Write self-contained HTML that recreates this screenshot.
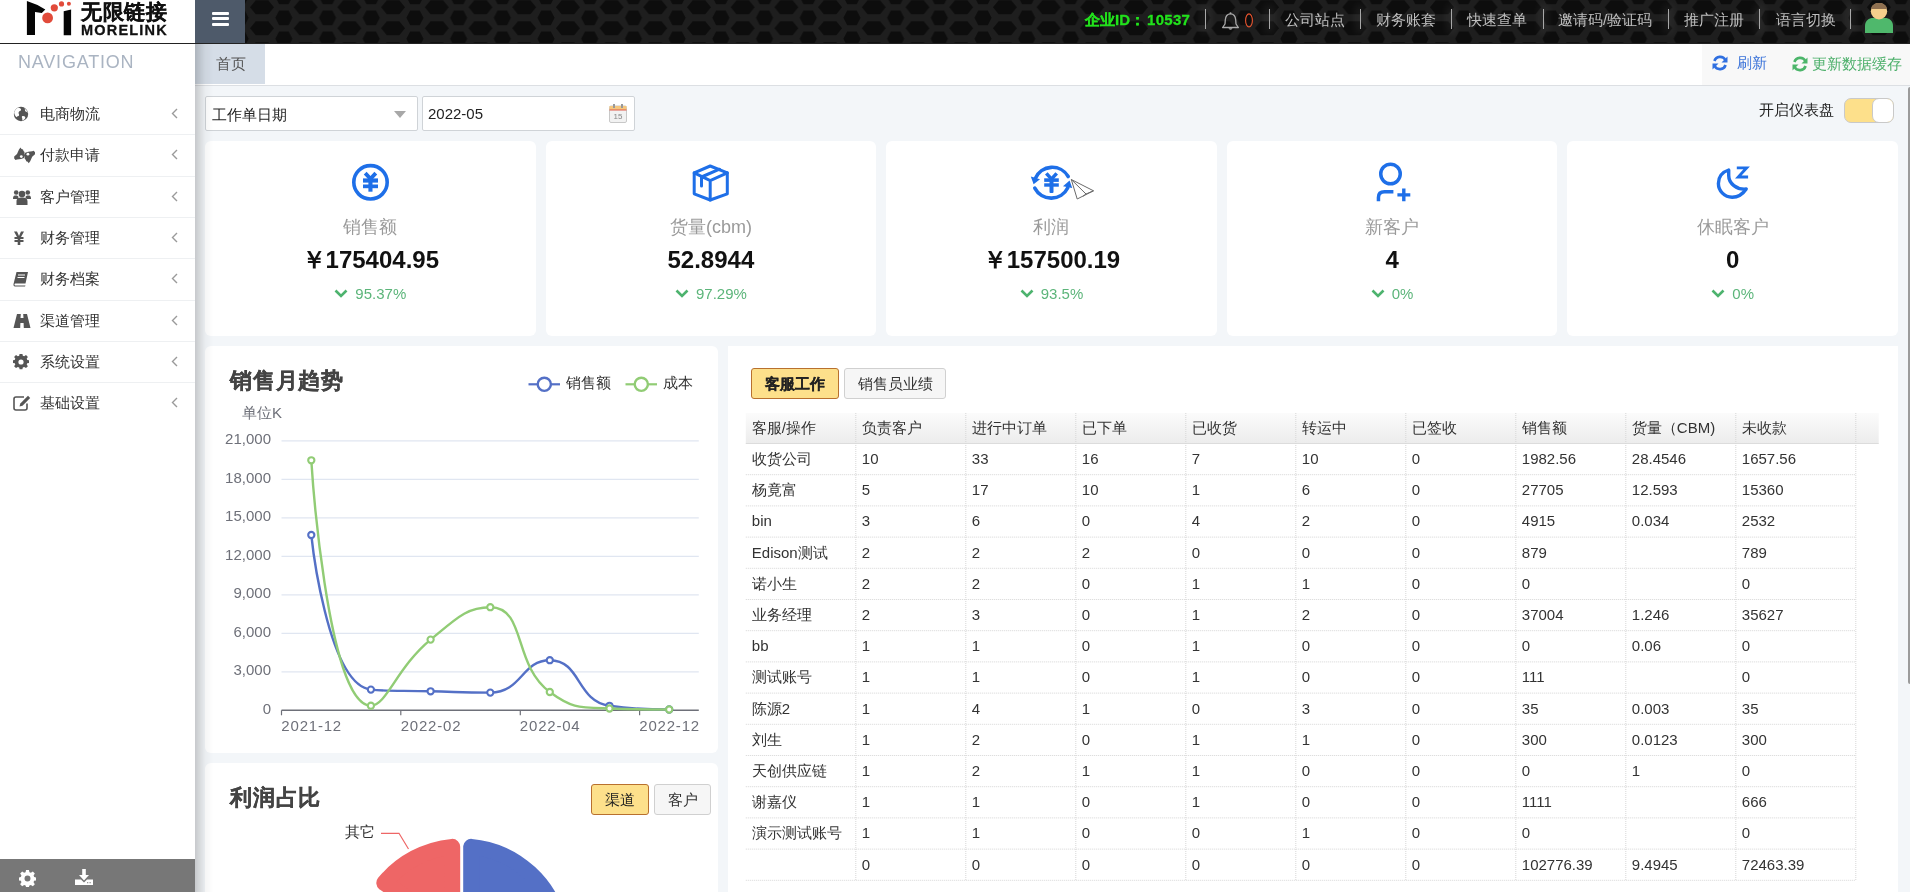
<!DOCTYPE html><html><head><meta charset="utf-8"><style>
*{box-sizing:border-box;margin:0;padding:0}
html,body{width:1910px;height:892px;overflow:hidden}
body{position:relative;background:#f3f6f9;font-family:"Liberation Sans",sans-serif;color:#333;font-size:14px}
.abs{position:absolute}
svg{display:block}
#side{left:0;top:0;width:195px;height:892px;background:#fff}
#hdr{left:195px;top:0;width:1715px;height:43px;background:#1c1c1c;overflow:hidden}
#hline{left:0;top:43px;width:1910px;height:1px;background:#222}
#ham{left:195px;top:0;width:50px;height:43px;background:#4e5a6a}
#tabbar{left:195px;top:44px;width:1715px;height:41px;background:#fff}
#tabline{left:195px;top:85px;width:1715px;height:1px;background:#dcdfe3}
#shadow{left:195px;top:44px;width:18px;height:848px;z-index:5;background:linear-gradient(to right,rgba(0,0,0,.18) 0px,rgba(0,0,0,.11) 5px,rgba(0,0,0,.05) 9px,rgba(0,0,0,.03) 11px,rgba(0,0,0,.015) 15px,rgba(0,0,0,0) 18px)}
.nav{position:absolute;left:0;width:195px;height:41px;}
.nav .t{position:absolute;left:40px;top:12px;font-size:15px;line-height:18px;color:#333;white-space:nowrap}
.nav .ic{position:absolute;left:13px;top:13px;width:22px;height:16px}
.nav .ch{position:absolute;left:171px;top:15px}
.sep{position:absolute;left:0;width:195px;height:1px;background:#eef0f2}
.hi{position:absolute;top:11px;font-size:15px;line-height:18px;color:#bfbfbf;white-space:nowrap}
.hs{position:absolute;top:9px;width:1px;height:20px;background:#a8a8a8;box-shadow:0 0 9px 4px rgba(255,255,255,.07)}
.card{position:absolute;top:141px;width:331px;height:195px;background:#fff;border-radius:6px}
.card .ico{position:absolute;left:0;top:22px;width:331px;height:40px}
.card .lb{position:absolute;left:0;width:331px;top:74.5px;text-align:center;font-size:18px;line-height:22px;color:#9a9a9a;white-space:nowrap}
.card .vl{position:absolute;left:0;width:331px;top:105px;text-align:center;font-size:24px;line-height:28px;color:#111;font-weight:bold;white-space:nowrap}
.card .pc{position:absolute;left:0;width:331px;top:143.5px;text-align:center;font-size:15px;line-height:18px;color:#5cb57a;white-space:nowrap}
.panel{position:absolute;background:#fff;border-radius:6px}
table.dt{position:absolute;border-collapse:collapse;table-layout:fixed;font-size:15px;color:#333}
.dt td,.dt th{height:31.2px;padding:0 0 0 6px;text-align:left;font-weight:normal;white-space:nowrap;overflow:hidden;border-bottom:1px dotted #c8c8c8;border-right:1px dotted #c8c8c8}
.dt th{background:linear-gradient(#fafafa,#ececec);border-bottom:1px solid #dcdcdc;height:30.7px}
#root{position:absolute;left:0;top:0;width:1910px;height:892px;will-change:transform}</style></head><body><div id="root">
<div id="side" class="abs">
<svg class="abs" style="left:0;top:0" width="80" height="43" viewBox="0 0 80 43">
<path d="M26.9,1 Q37,4 45.3,9.6 L41.8,13 L35,12 L35,35 L26.9,35 Z" fill="#050505"/>
<path d="M63.7,11.2 L71.1,9.4 L71.1,35.2 L63.7,35.2 Z" fill="#050505"/>
<circle cx="47.6" cy="17.9" r="5.4" fill="#e14b3b"/>
<circle cx="54.3" cy="7.8" r="3.6" fill="#e14b3b"/>
<circle cx="61.5" cy="3.9" r="2.6" fill="#e14b3b"/>
<circle cx="68.9" cy="3.8" r="2" fill="#e14b3b"/>
</svg>
<div class="abs" style="left:81px;top:0px;font-size:21px;line-height:24px;font-weight:bold;color:#111;white-space:nowrap;letter-spacing:0.6px;-webkit-text-stroke:0.25px #111">无限链接</div>
<div class="abs" style="left:81px;top:22px;font-size:14.5px;line-height:16px;font-weight:bold;color:#111;letter-spacing:1.2px;white-space:nowrap;-webkit-text-stroke:0.3px #111">MORELINK</div>
<div class="abs" style="left:18px;top:52px;font-size:18px;line-height:20px;color:#aab4c2;letter-spacing:0.8px">NAVIGATION</div>
<div class="nav" style="top:93.1px"><div class="ic"><svg width="16" height="16" viewBox="0 0 16 16"><circle cx="8" cy="8" r="7.2" fill="#555"/><path d="M5.5,1.6 C7,2.2 8.3,2.6 8,4 C7.7,5.2 6,5 5.6,6.4 C5.2,7.6 6.6,8.4 6,9.6 C5.5,10.6 4.2,10.2 3.6,11.2 C2.2,10 1.2,8 1.2,6.5 C2,4 3.5,2.5 5.5,1.6 Z" fill="#fff"/><path d="M9.5,10 C11,9.6 12.6,10.4 12.3,12 C12,13.3 10.5,14 9.6,14.6 C9,13.8 9.6,12.8 9,11.8 C8.7,11.2 8.8,10.3 9.5,10 Z" fill="#fff"/><path d="M11,2.2 C12,3 12.3,4 12,5 C13,5.5 14,6 14.6,7 C14.4,5 13.2,3.2 11,2.2 Z" fill="#fff"/></svg></div><div class="t">电商物流</div><svg class="ch" width="7" height="11" viewBox="0 0 7 11"><path d="M6,1 L1.5,5.5 L6,10" stroke="#9a9a9a" stroke-width="1.4" fill="none"/></svg></div>
<div class="sep" style="top:134.4px"></div>
<div class="nav" style="top:134.4px"><div class="ic"><svg width="24" height="17" viewBox="0 0 24 17"><path d="M1.2,9.5 L4.0,7.0 L6.0,2.5 L7.5,0.6 L8.5,2.0 L10.0,2.5 L10.5,4.0 L11.5,5.0 L11.5,7.0 L12.0,8.5 L11.0,11.0 L8.0,12.0 L4.0,12.5 L2.5,13.0 L1.2,11.5 Z" fill="#555"/><path d="M22.0,7.3 L19.2,9.8 L17.2,14.3 L15.7,16.2 L14.7,14.8 L13.2,14.3 L12.7,12.8 L11.7,11.8 L11.7,9.8 L11.2,8.3 L12.2,5.8 L15.2,4.8 L19.2,4.3 L20.7,3.8 L22.0,5.3 Z" fill="#555"/><circle cx="8.3" cy="9.6" r="1.4" fill="#fff"/><circle cx="14.9" cy="7.2" r="1.4" fill="#fff"/></svg></div><div class="t">付款申请</div><svg class="ch" width="7" height="11" viewBox="0 0 7 11"><path d="M6,1 L1.5,5.5 L6,10" stroke="#9a9a9a" stroke-width="1.4" fill="none"/></svg></div>
<div class="sep" style="top:175.7px"></div>
<div class="nav" style="top:175.7px"><div class="ic"><svg width="18" height="16" viewBox="0 0 18 16"><circle cx="3.2" cy="3.5" r="2.3" fill="#555"/><circle cx="14.8" cy="3.5" r="2.3" fill="#555"/><circle cx="9" cy="5" r="3.3" fill="#555"/><path d="M0,9.5 C0,7 1,6.5 3,6.5 C4.5,6.5 5,7 5.5,8 L5,10 L0,10 Z M18,9.5 C18,7 17,6.5 15,6.5 C13.5,6.5 13,7 12.5,8 L13,10 L18,10 Z M3.5,16 L3.5,12.5 C3.5,9.5 5.5,8.5 9,8.5 C12.5,8.5 14.5,9.5 14.5,12.5 L14.5,16 Z" fill="#555"/></svg></div><div class="t">客户管理</div><svg class="ch" width="7" height="11" viewBox="0 0 7 11"><path d="M6,1 L1.5,5.5 L6,10" stroke="#9a9a9a" stroke-width="1.4" fill="none"/></svg></div>
<div class="sep" style="top:217.0px"></div>
<div class="nav" style="top:217.0px"><div class="ic"><svg width="12" height="16" viewBox="0 0 12 16"><path d="M1,1.5 L4,1.5 L6,6 L8,1.5 L11,1.5 L8,7 L10.5,7 L10.5,9 L7.3,9 L7.3,10 L10.5,10 L10.5,12 L7.3,12 L7.3,15 L4.7,15 L4.7,12 L1.5,12 L1.5,10 L4.7,10 L4.7,9 L1.5,9 L1.5,7 L4,7 Z" fill="#555"/></svg></div><div class="t">财务管理</div><svg class="ch" width="7" height="11" viewBox="0 0 7 11"><path d="M6,1 L1.5,5.5 L6,10" stroke="#9a9a9a" stroke-width="1.4" fill="none"/></svg></div>
<div class="sep" style="top:258.3px"></div>
<div class="nav" style="top:258.3px"><div class="ic"><svg width="16" height="16" viewBox="0 0 16 16"><path d="M3.5,1 L15,1 L12.5,12.5 L2.5,12.5 C1.8,12.5 1.5,13 1.5,13.5 C1.5,14 1.8,14.5 2.5,14.5 L12.5,14.5 L12,15.5 L2,15.5 C0.8,15.5 0.3,14.5 0.5,13 Z" fill="#555"/><path d="M5,4 L12,4 M4.5,6.5 L11.5,6.5" stroke="#fff" stroke-width="1"/></svg></div><div class="t">财务档案</div><svg class="ch" width="7" height="11" viewBox="0 0 7 11"><path d="M6,1 L1.5,5.5 L6,10" stroke="#9a9a9a" stroke-width="1.4" fill="none"/></svg></div>
<div class="sep" style="top:299.6px"></div>
<div class="nav" style="top:299.6px"><div class="ic"><svg width="18" height="16" viewBox="0 0 18 16"><path d="M4,1 L7.8,1 L7.5,5 L10.5,5 L10.2,1 L14,1 L17.5,15 L10.8,15 L10.6,10 L7.4,10 L7.2,15 L0.5,15 Z" fill="#555"/></svg></div><div class="t">渠道管理</div><svg class="ch" width="7" height="11" viewBox="0 0 7 11"><path d="M6,1 L1.5,5.5 L6,10" stroke="#9a9a9a" stroke-width="1.4" fill="none"/></svg></div>
<div class="sep" style="top:340.9px"></div>
<div class="nav" style="top:340.9px"><div class="ic"><svg width="16" height="16" viewBox="0 0 16 16"><path d="M6.6,0.5 L9.4,0.5 L9.8,2.6 L11.2,3.2 L13,2 L14.9,3.9 L13.7,5.7 L14.3,7.1 L16,7.5 L16,10.3 L14.2,10.7 L13.7,12 L14.9,13.8 L13,15.7 L11.2,14.5 L9.8,15 L9.4,17 L6.6,17 L6.2,15 L4.8,14.5 L3,15.7 L1.1,13.8 L2.3,12 L1.8,10.7 L0,10.3 L0,7.5 L1.7,7.1 L2.3,5.7 L1.1,3.9 L3,2 L4.8,3.2 L6.2,2.6 Z" transform="translate(0,-0.8) scale(1,0.95)" fill="#555"/><circle cx="8" cy="8" r="2.6" fill="#fff"/></svg></div><div class="t">系统设置</div><svg class="ch" width="7" height="11" viewBox="0 0 7 11"><path d="M6,1 L1.5,5.5 L6,10" stroke="#9a9a9a" stroke-width="1.4" fill="none"/></svg></div>
<div class="sep" style="top:382.2px"></div>
<div class="nav" style="top:382.2px"><div class="ic"><svg width="18" height="16" viewBox="0 0 18 16"><path d="M11,2 L3,2 C1.8,2 1,2.8 1,4 L1,13 C1,14.2 1.8,15 3,15 L12,15 C13.2,15 14,14.2 14,13 L14,8.5" stroke="#555" stroke-width="1.6" fill="none"/><path d="M15,0.8 L17.2,3 L9.5,10.7 L6.5,11.5 L7.3,8.5 Z" fill="#555"/></svg></div><div class="t">基础设置</div><svg class="ch" width="7" height="11" viewBox="0 0 7 11"><path d="M6,1 L1.5,5.5 L6,10" stroke="#9a9a9a" stroke-width="1.4" fill="none"/></svg></div>

<div class="abs" style="left:0;top:859px;width:195px;height:33px;background:#777"></div>
<svg class="abs" style="left:19px;top:870px" width="17" height="17" viewBox="0 0 16 16"><path d="M6.6,0 L9.4,0 L9.8,2.1 L11.2,2.7 L13,1.5 L14.9,3.4 L13.7,5.2 L14.3,6.6 L16,7 L16,9.8 L14.2,10.2 L13.7,11.5 L14.9,13.3 L13,15.2 L11.2,14 L9.8,14.5 L9.4,16 L6.6,16 L6.2,14.5 L4.8,14 L3,15.2 L1.1,13.3 L2.3,11.5 L1.8,10.2 L0,9.8 L0,7 L1.7,6.6 L2.3,5.2 L1.1,3.4 L3,1.5 L4.8,2.7 L6.2,2.1 Z" fill="#fff"/><circle cx="8" cy="8" r="2.8" fill="#777"/></svg>
<svg class="abs" style="left:75px;top:869px" width="18" height="17" viewBox="0 0 18 17"><path d="M7.2,0 L10.8,0 L10.8,6 L14,6 L9,11.5 L4,6 L7.2,6 Z" fill="#fff"/><path d="M0,10.5 L6,10.5 L9,13.5 L12,10.5 L18,10.5 L18,16 L0,16 Z" fill="#fff"/><rect x="12" y="13" width="1.3" height="1.3" fill="#999"/><rect x="14.5" y="13" width="1.3" height="1.3" fill="#999"/></svg>
</div>
<div id="hdr" class="abs"><svg class="abs" style="left:0;top:0" width="1715" height="43"><defs><pattern id="hx" patternUnits="userSpaceOnUse" x="23.3" y="0" width="43.7" height="21.0"><rect width="43.7" height="21.0" fill="#1e1e1e"/><path d="M-12.00,-13.70 L-6.30,-20.70 L6.30,-20.70 L12.00,-13.70 L6.30,-6.70 L-6.30,-6.70 Z M-12.00,7.30 L-6.30,0.30 L6.30,0.30 L12.00,7.30 L6.30,14.30 L-6.30,14.30 Z M-12.00,28.30 L-6.30,21.30 L6.30,21.30 L12.00,28.30 L6.30,35.30 L-6.30,35.30 Z M31.70,-13.70 L37.40,-20.70 L50.00,-20.70 L55.70,-13.70 L50.00,-6.70 L37.40,-6.70 Z M31.70,7.30 L37.40,0.30 L50.00,0.30 L55.70,7.30 L50.00,14.30 L37.40,14.30 Z M31.70,28.30 L37.40,21.30 L50.00,21.30 L55.70,28.30 L50.00,35.30 L37.40,35.30 Z M13.25,-3.20 L17.05,-10.60 L26.65,-10.60 L30.45,-3.20 L26.65,4.20 L17.05,4.20 Z M13.25,17.80 L17.05,10.40 L26.65,10.40 L30.45,17.80 L26.65,25.20 L17.05,25.20 Z M13.25,38.80 L17.05,31.40 L26.65,31.40 L30.45,38.80 L26.65,46.20 L17.05,46.20 Z" fill="#0d0d0d"/></pattern></defs><rect width="1715" height="43" fill="url(#hx)"/></svg></div>
<div id="ham" class="abs">
<div class="abs" style="left:17px;top:12px;width:17px;height:3px;background:#fff;border-radius:1px"></div>
<div class="abs" style="left:17px;top:17.3px;width:17px;height:3px;background:#fff;border-radius:1px"></div>
<div class="abs" style="left:17px;top:22.5px;width:17px;height:3px;background:#fff;border-radius:1px"></div>
</div>
<div id="hline" class="abs"></div>
<div class="abs" style="left:1085px;top:10px;font-size:15px;line-height:19px;font-weight:bold;color:#22e11c;white-space:nowrap;-webkit-text-stroke:0.3px #22e11c">企业ID：<span style="margin-left:2px;letter-spacing:0.3px">10537</span></div>
<div class="hs" style="left:1205px"></div>
<div class="hs" style="left:1269px"></div>
<div class="hs" style="left:1360px"></div>
<div class="hs" style="left:1451px"></div>
<div class="hs" style="left:1543px"></div>
<div class="hs" style="left:1668px"></div>
<div class="hs" style="left:1759px"></div>
<div class="hs" style="left:1850px"></div>
<svg class="abs" style="left:1221px;top:12px" width="19" height="19" viewBox="0 0 19 19"><path d="M9.5,1.8 C6.2,1.8 4.5,4.5 4.3,8 L4,12 L1.6,15.5 L17.4,15.5 L15,12 L14.7,8 C14.5,4.5 12.8,1.8 9.5,1.8 Z" stroke="#aaa" stroke-width="1.3" fill="none" stroke-linejoin="round"/><path d="M7.6,16.3 C7.6,18.2 11.4,18.2 11.4,16.3 Z" fill="#aaa"/><circle cx="9.5" cy="1.3" r="1" fill="#aaa"/></svg>
<svg class="abs" style="left:1240px;top:10px" width="18" height="22" viewBox="1240 10 18 22"><ellipse cx="1249" cy="20.4" rx="3.4" ry="6.5" stroke="#e8552f" stroke-width="1.1" fill="none"/></svg>
<div class="hi" style="left:1285px">公司站点</div>
<div class="hi" style="left:1376px">财务账套</div>
<div class="hi" style="left:1467px">快速查单</div>
<div class="hi" style="left:1558px">邀请码/验证码</div>
<div class="hi" style="left:1684px">推广注册</div>
<div class="hi" style="left:1776px">语言切换</div>
<svg class="abs" style="left:1864px;top:2px" width="30" height="32" viewBox="0 0 30 32"><path d="M1,31 L1,24 C1,18.5 5,16 9,16 L21,16 C25,16 29,18.5 29,24 L29,31 Z" fill="#4fb86c"/><circle cx="15" cy="9.3" r="8.2" fill="#f6cf8c"/><path d="M7,7 C7.5,3 11,1.1 15,1.1 C19,1.1 22.5,3 23,7 Z" fill="#8f7050"/></svg>
<div id="tabbar" class="abs"></div>
<div class="abs" style="left:195px;top:44px;width:70px;height:40px;background:#d5dde7"></div>
<div class="abs" style="left:216px;top:56px;font-size:14.5px;line-height:17px;color:#555">首页</div>
<div class="abs" style="left:1702px;top:44px;width:208px;height:41px;background:#f8f8f8"></div>
<svg class="abs" style="left:1712px;top:55px;transform:scaleX(-1)" width="16" height="16" viewBox="0 0 16 16"><path d="M13.6,6 A6,6 0 0 0 2.6,5" stroke="#2f6fe0" stroke-width="2.6" fill="none"/><path d="M0.5,1.5 L0.5,7.5 L6.5,7.5 Z" fill="#2f6fe0"/><path d="M2.4,10 A6,6 0 0 0 13.4,11" stroke="#2f6fe0" stroke-width="2.6" fill="none"/><path d="M15.5,14.5 L15.5,8.5 L9.5,8.5 Z" fill="#2f6fe0"/></svg>
<div class="abs" style="left:1737px;top:54px;font-size:15px;line-height:18px;color:#3b73d9">刷新</div>
<svg class="abs" style="left:1792px;top:56px;transform:scaleX(-1)" width="16" height="16" viewBox="0 0 16 16"><path d="M13.6,6 A6,6 0 0 0 2.6,5" stroke="#4cb56a" stroke-width="2.6" fill="none"/><path d="M0.5,1.5 L0.5,7.5 L6.5,7.5 Z" fill="#4cb56a"/><path d="M2.4,10 A6,6 0 0 0 13.4,11" stroke="#4cb56a" stroke-width="2.6" fill="none"/><path d="M15.5,14.5 L15.5,8.5 L9.5,8.5 Z" fill="#4cb56a"/></svg>
<div class="abs" style="left:1812px;top:55px;font-size:15px;line-height:18px;color:#4caf6a;white-space:nowrap">更新数据缓存</div>
<div id="tabline" class="abs"></div>
<div id="shadow" class="abs"></div>
<div class="abs" style="left:205px;top:96px;width:213px;height:35px;background:#fff;border:1px solid #cfd3d7;border-radius:2px"></div>
<div class="abs" style="left:212px;top:106px;font-size:15px;line-height:18px;color:#222;white-space:nowrap">工作单日期</div>
<svg class="abs" style="left:394px;top:111px" width="12" height="7" viewBox="0 0 12 7"><path d="M0,0 L12,0 L6,7 Z" fill="#a8a8a8"/></svg>
<div class="abs" style="left:422px;top:96px;width:213px;height:35px;background:#fff;border:1px solid #cfd3d7;border-radius:2px"></div>
<div class="abs" style="left:428px;top:105px;font-size:15px;line-height:18px;color:#222">2022-05</div>
<svg class="abs" style="left:609px;top:104px" width="18" height="19" viewBox="0 0 18 19"><rect x="0.5" y="2" width="17" height="16.5" rx="1.5" fill="#f2f2f2" stroke="#c8c8c8" stroke-width="1"/><rect x="0.5" y="2" width="17" height="4" fill="#f5c77e"/><rect x="0.5" y="5.5" width="17" height="1" fill="#e05a4a"/><rect x="4" y="0" width="2" height="4" fill="#999"/><rect x="12" y="0" width="2" height="4" fill="#999"/><text x="9" y="15" font-size="8" font-family="Liberation Sans" fill="#888" text-anchor="middle">15</text></svg>
<div class="abs" style="left:1759px;top:101px;font-size:15px;line-height:18px;color:#222;white-space:nowrap">开启仪表盘</div>
<div class="abs" style="left:1844px;top:98px;width:50px;height:25px;background:#fde08b;border:1px solid #c9c9c9;border-radius:7px;overflow:hidden"><div class="abs" style="left:27px;top:-1px;width:22px;height:25px;background:#fff;border:1px solid #c9c9c9;border-radius:7px"></div></div>
<div class="card" style="left:205.0px;width:330.6px"><div class="lb" style="width:330.6px">销售额</div><div class="vl" style="width:330.6px">￥175404.95</div><div class="pc" style="width:330.6px"><svg width="14" height="9" viewBox="0 0 14 9" style="display:inline-block;vertical-align:1px;margin-right:7px"><path d="M1.5,1.5 L7,7 L12.5,1.5" stroke="#4db36e" stroke-width="2.6" fill="none"/></svg>95.37%</div></div>
<svg class="abs" style="left:345px;top:158px" width="50" height="48" viewBox="345 158 50 48"><circle cx="370.5" cy="182.3" r="16.7" stroke="#1e6fe8" stroke-width="3.6" fill="none"/><path d="M363.8,174.6 L366.6,171.8 L370.5,176 L374.4,171.8 L377.2,174.6 L372.5,179.5 L368.5,179.5 Z" fill="#1e6fe8"/><rect x="363" y="178.4" width="15" height="4.2" fill="#1e6fe8"/><rect x="363" y="184.5" width="15" height="3.7" fill="#1e6fe8"/><rect x="368.4" y="178.4" width="4.1" height="13.3" fill="#1e6fe8"/></svg>
<div class="card" style="left:545.6px;width:330.6px"><div class="lb" style="width:330.6px">货量(cbm)</div><div class="vl" style="width:330.6px">52.8944</div><div class="pc" style="width:330.6px"><svg width="14" height="9" viewBox="0 0 14 9" style="display:inline-block;vertical-align:1px;margin-right:7px"><path d="M1.5,1.5 L7,7 L12.5,1.5" stroke="#4db36e" stroke-width="2.6" fill="none"/></svg>97.29%</div></div>
<svg class="abs" style="left:685px;top:158px" width="50" height="48" viewBox="685 158 50 48"><path d="M710.2,166 L727.3,172.8 L727.3,193.8 L710.2,200 L694.2,193.8 L694.2,172.8 Z" stroke="#1e6fe8" stroke-width="3" fill="none" stroke-linejoin="round"/><path d="M694.2,172.8 L710.2,180.5 L727.3,172.8 M710.2,180.5 L710.2,200 M701.5,177 L719.5,169.2 M701.5,177 L701.5,186" stroke="#1e6fe8" stroke-width="3" fill="none" stroke-linecap="round"/></svg>
<div class="card" style="left:886.2px;width:330.6px"><div class="lb" style="width:330.6px">利润</div><div class="vl" style="width:330.6px">￥157500.19</div><div class="pc" style="width:330.6px"><svg width="14" height="9" viewBox="0 0 14 9" style="display:inline-block;vertical-align:1px;margin-right:7px"><path d="M1.5,1.5 L7,7 L12.5,1.5" stroke="#4db36e" stroke-width="2.6" fill="none"/></svg>93.5%</div></div>
<svg class="abs" style="left:1025px;top:158px" width="75" height="48" viewBox="1025 158 75 48"><path d="M1035.2,178.6 A18.5,18.5 0 0 1 1068.2,176.5" stroke="#1e6fe8" stroke-width="3.6" fill="none" stroke-linecap="round"/><path d="M1067.8,187.8 A18.5,18.5 0 0 1 1034.8,188.2" stroke="#1e6fe8" stroke-width="3.6" fill="none" stroke-linecap="round"/><path d="M1030.8,176.4 L1040,179.2 L1033.6,184.2 Z" fill="#1e6fe8"/><path d="M1069.6,180.6 L1072.2,188 L1063,186.2 Z" fill="#1e6fe8"/><path d="M1045,174.4 L1047.6,172.2 L1051.5,176.6 L1055.4,172.2 L1058,174.4 L1053.6,179.3 L1049.4,179.3 Z" fill="#1e6fe8"/><rect x="1044.2" y="178.3" width="14.6" height="3.6" fill="#1e6fe8"/><rect x="1044.2" y="183.3" width="14.6" height="3.4" fill="#1e6fe8"/><rect x="1049.5" y="178.3" width="4" height="14.8" rx="1" fill="#1e6fe8"/><path d="M1071.3,179.5 L1093.5,190.8 L1077.2,199 Z M1071.3,179.5 L1086,194 L1083,196.2 M1086,194 L1093.5,190.8" stroke="#6a6a6a" stroke-width="1" fill="#fff" stroke-linejoin="round"/></svg>
<div class="card" style="left:1226.8px;width:330.6px"><div class="lb" style="width:330.6px">新客户</div><div class="vl" style="width:330.6px">4</div><div class="pc" style="width:330.6px"><svg width="14" height="9" viewBox="0 0 14 9" style="display:inline-block;vertical-align:1px;margin-right:7px"><path d="M1.5,1.5 L7,7 L12.5,1.5" stroke="#4db36e" stroke-width="2.6" fill="none"/></svg>0%</div></div>
<svg class="abs" style="left:1365px;top:155px" width="55" height="52" viewBox="1365 155 55 52"><circle cx="1390.5" cy="174" r="9.75" stroke="#1e6fe8" stroke-width="3.5" fill="none"/><path d="M1378.45,201.2 L1378.45,197.5 C1378.45,193.5 1380.5,191.85 1384.5,191.85 L1393.4,191.85" stroke="#1e6fe8" stroke-width="3.5" fill="none" stroke-linecap="butt"/><path d="M1403.8,188.6 L1403.8,201.2 M1397.4,194.9 L1410.3,194.9" stroke="#1e6fe8" stroke-width="3.4" fill="none"/></svg>
<div class="card" style="left:1567.4px;width:330.6px"><div class="lb" style="width:330.6px">休眠客户</div><div class="vl" style="width:330.6px">0</div><div class="pc" style="width:330.6px"><svg width="14" height="9" viewBox="0 0 14 9" style="display:inline-block;vertical-align:1px;margin-right:7px"><path d="M1.5,1.5 L7,7 L12.5,1.5" stroke="#4db36e" stroke-width="2.6" fill="none"/></svg>0%</div></div>
<svg class="abs" style="left:1705px;top:155px" width="55" height="52" viewBox="1705 155 55 52"><path d="M1728.7,170 C1721,172.5 1718.4,177.5 1718.4,183.5 C1718.4,191 1724.5,197.2 1732.2,197.2 C1738,197.2 1743.2,193.5 1746.2,189 C1736.7,190 1728.7,183.5 1728.7,175.5 C1728.7,173.5 1728.7,172 1728.7,170 Z" stroke="#1e6fe8" stroke-width="3.4" fill="none" stroke-linejoin="round"/><path d="M1738.2,167.8 L1746.7,167.8 L1738.2,177 L1746.7,177" stroke="#1e6fe8" stroke-width="2.8" fill="none" stroke-linecap="square" stroke-linejoin="miter"/></svg>
<div class="panel" style="left:205px;top:346px;width:513px;height:407px"></div>
<div class="abs" style="left:230px;top:368px;font-size:22px;line-height:26px;font-weight:bold;color:#444;-webkit-text-stroke:0.3px #444;letter-spacing:0.8px;white-space:nowrap">销售月趋势</div>
<svg class="abs" style="left:0;top:0" width="1910" height="892" viewBox="0 0 1910 892"><path d="M528.5,384.3 L560,384.3" stroke="#5470c6" stroke-width="2.2"/><circle cx="544.3" cy="384.3" r="6.6" stroke="#5470c6" stroke-width="2.4" fill="#fff"/><path d="M625.5,384.3 L657,384.3" stroke="#91cc75" stroke-width="2.2"/><circle cx="641.3" cy="384.3" r="6.6" stroke="#91cc75" stroke-width="2.4" fill="#fff"/></svg>
<div class="abs" style="left:566px;top:374px;font-size:15px;line-height:17px;color:#333;white-space:nowrap">销售额</div>
<div class="abs" style="left:663px;top:374px;font-size:15px;line-height:17px;color:#333;white-space:nowrap">成本</div>
<div class="abs" style="left:242px;top:404px;font-size:15px;line-height:17px;color:#6e7079;white-space:nowrap">单位K</div>
<svg class="abs" style="left:0;top:0;pointer-events:none" width="1910" height="892" viewBox="0 0 1910 892"><path d="M281.5,671.8 L698.8,671.8" stroke="#e0e6f1" stroke-width="1.2"/><path d="M281.5,633.3 L698.8,633.3" stroke="#e0e6f1" stroke-width="1.2"/><path d="M281.5,594.8 L698.8,594.8" stroke="#e0e6f1" stroke-width="1.2"/><path d="M281.5,556.3 L698.8,556.3" stroke="#e0e6f1" stroke-width="1.2"/><path d="M281.5,517.8 L698.8,517.8" stroke="#e0e6f1" stroke-width="1.2"/><path d="M281.5,479.3 L698.8,479.3" stroke="#e0e6f1" stroke-width="1.2"/><path d="M281.5,440.8 L698.8,440.8" stroke="#e0e6f1" stroke-width="1.2"/><path d="M281.5,710.3 L698.8,710.3" stroke="#6e7079" stroke-width="1.4"/><path d="M281.5,710.3 L281.5,715.3" stroke="#6e7079" stroke-width="1.2"/><path d="M400.8,710.3 L400.8,715.3" stroke="#6e7079" stroke-width="1.2"/><path d="M520.3,710.3 L520.3,715.3" stroke="#6e7079" stroke-width="1.2"/><path d="M639.6,710.3 L639.6,715.3" stroke="#6e7079" stroke-width="1.2"/><path d="M311.30,535.00 C311.30,535.00 327.05,684.88 370.90,689.60 C386.70,691.30 400.75,690.55 430.60,691.30 C460.45,692.05 462.38,692.60 490.30,692.60 C521.98,692.60 521.54,660.20 549.80,660.20 C581.14,660.20 576.26,701.15 609.50,705.80 C635.96,709.50 669.20,709.50 669.20,709.50" stroke="#5470c6" stroke-width="2.4" fill="none"/><circle cx="311.3" cy="535.0" r="3.1" stroke="#5470c6" stroke-width="2.1" fill="#fff"/><circle cx="370.9" cy="689.6" r="3.1" stroke="#5470c6" stroke-width="2.1" fill="#fff"/><circle cx="430.6" cy="691.3" r="3.1" stroke="#5470c6" stroke-width="2.1" fill="#fff"/><circle cx="490.3" cy="692.6" r="3.1" stroke="#5470c6" stroke-width="2.1" fill="#fff"/><circle cx="549.8" cy="660.2" r="3.1" stroke="#5470c6" stroke-width="2.1" fill="#fff"/><circle cx="609.5" cy="705.8" r="3.1" stroke="#5470c6" stroke-width="2.1" fill="#fff"/><circle cx="669.2" cy="709.5" r="3.1" stroke="#5470c6" stroke-width="2.1" fill="#fff"/><path d="M311.30,460.30 C311.30,460.30 326.80,705.70 370.90,705.70 C386.45,705.70 396.73,667.54 430.60,639.60 C456.43,618.29 466.70,607.20 490.30,607.20 C526.30,607.20 512.50,664.40 549.80,692.00 C572.10,708.50 579.10,707.46 609.50,708.50 C638.80,709.50 669.20,709.50 669.20,709.50" stroke="#91cc75" stroke-width="2.4" fill="none"/><circle cx="311.3" cy="460.3" r="3.1" stroke="#91cc75" stroke-width="2.1" fill="#fff"/><circle cx="370.9" cy="705.7" r="3.1" stroke="#91cc75" stroke-width="2.1" fill="#fff"/><circle cx="430.6" cy="639.6" r="3.1" stroke="#91cc75" stroke-width="2.1" fill="#fff"/><circle cx="490.3" cy="607.2" r="3.1" stroke="#91cc75" stroke-width="2.1" fill="#fff"/><circle cx="549.8" cy="692.0" r="3.1" stroke="#91cc75" stroke-width="2.1" fill="#fff"/><circle cx="609.5" cy="708.5" r="3.1" stroke="#91cc75" stroke-width="2.1" fill="#fff"/><circle cx="669.2" cy="709.5" r="3.1" stroke="#91cc75" stroke-width="2.1" fill="#fff"/><text x="271" y="713.5" font-size="15" font-family="Liberation Sans" fill="#6e7079" text-anchor="end">0</text><text x="271" y="675.0" font-size="15" font-family="Liberation Sans" fill="#6e7079" text-anchor="end">3,000</text><text x="271" y="636.5" font-size="15" font-family="Liberation Sans" fill="#6e7079" text-anchor="end">6,000</text><text x="271" y="598.0" font-size="15" font-family="Liberation Sans" fill="#6e7079" text-anchor="end">9,000</text><text x="271" y="559.5" font-size="15" font-family="Liberation Sans" fill="#6e7079" text-anchor="end">12,000</text><text x="271" y="521.0" font-size="15" font-family="Liberation Sans" fill="#6e7079" text-anchor="end">15,000</text><text x="271" y="482.5" font-size="15" font-family="Liberation Sans" fill="#6e7079" text-anchor="end">18,000</text><text x="271" y="444.0" font-size="15" font-family="Liberation Sans" fill="#6e7079" text-anchor="end">21,000</text><text x="311.7" y="731" font-size="15" font-family="Liberation Sans" fill="#6e7079" text-anchor="middle" letter-spacing="0.8">2021-12</text><text x="431.0" y="731" font-size="15" font-family="Liberation Sans" fill="#6e7079" text-anchor="middle" letter-spacing="0.8">2022-02</text><text x="550.1999999999999" y="731" font-size="15" font-family="Liberation Sans" fill="#6e7079" text-anchor="middle" letter-spacing="0.8">2022-04</text><text x="669.6" y="731" font-size="15" font-family="Liberation Sans" fill="#6e7079" text-anchor="middle" letter-spacing="0.8">2022-12</text></svg>
<div class="panel" style="left:205px;top:763px;width:513px;height:140px"></div>
<div class="abs" style="left:230px;top:785px;font-size:22px;line-height:26px;font-weight:bold;color:#444;-webkit-text-stroke:0.3px #444;letter-spacing:0.8px;white-space:nowrap">利润占比</div>
<div class="abs" style="left:591px;top:784px;width:58px;height:31px;background:#fde08b;border:1px solid #b8702e;border-radius:3px;font-size:15px;line-height:29px;text-align:center;color:#222">渠道</div>
<div class="abs" style="left:654px;top:784px;width:57px;height:31px;background:#f6f6f6;border:1px solid #d0d0d0;border-radius:3px;font-size:15px;line-height:29px;text-align:center;color:#333">客户</div>
<svg class="abs" style="left:0;top:0" width="1910" height="892" viewBox="0 0 1910 892"><path d="M471.20,944.92 L504.74,1037.08 A100.20,100.20 0 0 0 471.20,846.85 Z" fill="#5470c6" stroke="#5470c6" stroke-width="16.0" stroke-linejoin="round"/><path d="M452.20,928.73 L452.20,846.85 A100.20,100.20 0 0 0 384.32,882.95 Z" fill="#ee6666" stroke="#ee6666" stroke-width="16.0" stroke-linejoin="round"/><path d="M381,833.3 L399,833.3 L408.5,849" stroke="#ee6666" stroke-width="1.2" fill="none"/></svg>
<div class="abs" style="left:345px;top:823px;font-size:15px;line-height:17px;color:#333">其它</div>
<div class="panel" style="left:728px;top:346px;width:1170px;height:560px;border-radius:0 0 0 0"></div>
<div class="abs" style="left:751px;top:368px;width:88px;height:31px;background:#fde08b;border:1px solid #b8702e;border-radius:3px;font-size:15px;line-height:29px;text-align:center;color:#222;font-weight:bold;-webkit-text-stroke:0.2px #222">客服工作</div>
<div class="abs" style="left:844px;top:368px;width:102px;height:31px;background:#f6f6f6;border:1px solid #d0d0d0;border-radius:3px;font-size:15px;line-height:29px;text-align:center;color:#333">销售员业绩</div>
<svg class="abs" style="left:0;top:0" width="1910" height="892" viewBox="0 0 1910 892"><defs><linearGradient id="thg" x1="0" y1="0" x2="0" y2="1"><stop offset="0" stop-color="#fbfbfb"/><stop offset="1" stop-color="#ececec"/></linearGradient></defs><rect x="745.8" y="413" width="1132.9" height="30.5" fill="url(#thg)"/><path d="M745.8,443.5 L1878.7,443.5" stroke="#dcdcdc" stroke-width="1"/><path d="M855.8,413 L855.8,880.3" stroke="#d6d6d6" stroke-width="1" stroke-dasharray="1,1"/><path d="M965.8,413 L965.8,880.3" stroke="#d6d6d6" stroke-width="1" stroke-dasharray="1,1"/><path d="M1075.8,413 L1075.8,880.3" stroke="#d6d6d6" stroke-width="1" stroke-dasharray="1,1"/><path d="M1185.8,413 L1185.8,880.3" stroke="#d6d6d6" stroke-width="1" stroke-dasharray="1,1"/><path d="M1295.8,413 L1295.8,880.3" stroke="#d6d6d6" stroke-width="1" stroke-dasharray="1,1"/><path d="M1405.8,413 L1405.8,880.3" stroke="#d6d6d6" stroke-width="1" stroke-dasharray="1,1"/><path d="M1515.8,413 L1515.8,880.3" stroke="#d6d6d6" stroke-width="1" stroke-dasharray="1,1"/><path d="M1625.8,413 L1625.8,880.3" stroke="#d6d6d6" stroke-width="1" stroke-dasharray="1,1"/><path d="M1735.8,413 L1735.8,880.3" stroke="#d6d6d6" stroke-width="1" stroke-dasharray="1,1"/><path d="M1855.8,413 L1855.8,880.3" stroke="#d6d6d6" stroke-width="1" stroke-dasharray="1,1"/><path d="M745.8,474.7 L1855.8,474.7" stroke="#d6d6d6" stroke-width="1" stroke-dasharray="1,1"/><path d="M745.8,505.9 L1855.8,505.9" stroke="#d6d6d6" stroke-width="1" stroke-dasharray="1,1"/><path d="M745.8,537.1 L1855.8,537.1" stroke="#d6d6d6" stroke-width="1" stroke-dasharray="1,1"/><path d="M745.8,568.3 L1855.8,568.3" stroke="#d6d6d6" stroke-width="1" stroke-dasharray="1,1"/><path d="M745.8,599.5 L1855.8,599.5" stroke="#d6d6d6" stroke-width="1" stroke-dasharray="1,1"/><path d="M745.8,630.7 L1855.8,630.7" stroke="#d6d6d6" stroke-width="1" stroke-dasharray="1,1"/><path d="M745.8,661.9 L1855.8,661.9" stroke="#d6d6d6" stroke-width="1" stroke-dasharray="1,1"/><path d="M745.8,693.1 L1855.8,693.1" stroke="#d6d6d6" stroke-width="1" stroke-dasharray="1,1"/><path d="M745.8,724.3 L1855.8,724.3" stroke="#d6d6d6" stroke-width="1" stroke-dasharray="1,1"/><path d="M745.8,755.5 L1855.8,755.5" stroke="#d6d6d6" stroke-width="1" stroke-dasharray="1,1"/><path d="M745.8,786.7 L1855.8,786.7" stroke="#d6d6d6" stroke-width="1" stroke-dasharray="1,1"/><path d="M745.8,817.9 L1855.8,817.9" stroke="#d6d6d6" stroke-width="1" stroke-dasharray="1,1"/><path d="M745.8,849.1 L1855.8,849.1" stroke="#d6d6d6" stroke-width="1" stroke-dasharray="1,1"/><path d="M745.8,880.3 L1855.8,880.3" stroke="#d6d6d6" stroke-width="1" stroke-dasharray="1,1"/></svg>
<div class="abs" style="left:751.8px;top:419.0px;font-size:15px;line-height:18px;color:#333;white-space:nowrap">客服/操作</div><div class="abs" style="left:861.8px;top:419.0px;font-size:15px;line-height:18px;color:#333;white-space:nowrap">负责客户</div><div class="abs" style="left:971.8px;top:419.0px;font-size:15px;line-height:18px;color:#333;white-space:nowrap">进行中订单</div><div class="abs" style="left:1081.8px;top:419.0px;font-size:15px;line-height:18px;color:#333;white-space:nowrap">已下单</div><div class="abs" style="left:1191.8px;top:419.0px;font-size:15px;line-height:18px;color:#333;white-space:nowrap">已收货</div><div class="abs" style="left:1301.8px;top:419.0px;font-size:15px;line-height:18px;color:#333;white-space:nowrap">转运中</div><div class="abs" style="left:1411.8px;top:419.0px;font-size:15px;line-height:18px;color:#333;white-space:nowrap">已签收</div><div class="abs" style="left:1521.8px;top:419.0px;font-size:15px;line-height:18px;color:#333;white-space:nowrap">销售额</div><div class="abs" style="left:1631.8px;top:419.0px;font-size:15px;line-height:18px;color:#333;white-space:nowrap">货量（CBM)</div><div class="abs" style="left:1741.8px;top:419.0px;font-size:15px;line-height:18px;color:#333;white-space:nowrap">未收款</div><div class="abs" style="left:751.8px;top:450.0px;font-size:15px;line-height:18px;color:#333;white-space:nowrap">收货公司</div><div class="abs" style="left:861.8px;top:450.0px;font-size:15px;line-height:18px;color:#333;white-space:nowrap">10</div><div class="abs" style="left:971.8px;top:450.0px;font-size:15px;line-height:18px;color:#333;white-space:nowrap">33</div><div class="abs" style="left:1081.8px;top:450.0px;font-size:15px;line-height:18px;color:#333;white-space:nowrap">16</div><div class="abs" style="left:1191.8px;top:450.0px;font-size:15px;line-height:18px;color:#333;white-space:nowrap">7</div><div class="abs" style="left:1301.8px;top:450.0px;font-size:15px;line-height:18px;color:#333;white-space:nowrap">10</div><div class="abs" style="left:1411.8px;top:450.0px;font-size:15px;line-height:18px;color:#333;white-space:nowrap">0</div><div class="abs" style="left:1521.8px;top:450.0px;font-size:15px;line-height:18px;color:#333;white-space:nowrap">1982.56</div><div class="abs" style="left:1631.8px;top:450.0px;font-size:15px;line-height:18px;color:#333;white-space:nowrap">28.4546</div><div class="abs" style="left:1741.8px;top:450.0px;font-size:15px;line-height:18px;color:#333;white-space:nowrap">1657.56</div><div class="abs" style="left:751.8px;top:481.2px;font-size:15px;line-height:18px;color:#333;white-space:nowrap">杨竟富</div><div class="abs" style="left:861.8px;top:481.2px;font-size:15px;line-height:18px;color:#333;white-space:nowrap">5</div><div class="abs" style="left:971.8px;top:481.2px;font-size:15px;line-height:18px;color:#333;white-space:nowrap">17</div><div class="abs" style="left:1081.8px;top:481.2px;font-size:15px;line-height:18px;color:#333;white-space:nowrap">10</div><div class="abs" style="left:1191.8px;top:481.2px;font-size:15px;line-height:18px;color:#333;white-space:nowrap">1</div><div class="abs" style="left:1301.8px;top:481.2px;font-size:15px;line-height:18px;color:#333;white-space:nowrap">6</div><div class="abs" style="left:1411.8px;top:481.2px;font-size:15px;line-height:18px;color:#333;white-space:nowrap">0</div><div class="abs" style="left:1521.8px;top:481.2px;font-size:15px;line-height:18px;color:#333;white-space:nowrap">27705</div><div class="abs" style="left:1631.8px;top:481.2px;font-size:15px;line-height:18px;color:#333;white-space:nowrap">12.593</div><div class="abs" style="left:1741.8px;top:481.2px;font-size:15px;line-height:18px;color:#333;white-space:nowrap">15360</div><div class="abs" style="left:751.8px;top:512.4px;font-size:15px;line-height:18px;color:#333;white-space:nowrap">bin</div><div class="abs" style="left:861.8px;top:512.4px;font-size:15px;line-height:18px;color:#333;white-space:nowrap">3</div><div class="abs" style="left:971.8px;top:512.4px;font-size:15px;line-height:18px;color:#333;white-space:nowrap">6</div><div class="abs" style="left:1081.8px;top:512.4px;font-size:15px;line-height:18px;color:#333;white-space:nowrap">0</div><div class="abs" style="left:1191.8px;top:512.4px;font-size:15px;line-height:18px;color:#333;white-space:nowrap">4</div><div class="abs" style="left:1301.8px;top:512.4px;font-size:15px;line-height:18px;color:#333;white-space:nowrap">2</div><div class="abs" style="left:1411.8px;top:512.4px;font-size:15px;line-height:18px;color:#333;white-space:nowrap">0</div><div class="abs" style="left:1521.8px;top:512.4px;font-size:15px;line-height:18px;color:#333;white-space:nowrap">4915</div><div class="abs" style="left:1631.8px;top:512.4px;font-size:15px;line-height:18px;color:#333;white-space:nowrap">0.034</div><div class="abs" style="left:1741.8px;top:512.4px;font-size:15px;line-height:18px;color:#333;white-space:nowrap">2532</div><div class="abs" style="left:751.8px;top:543.6px;font-size:15px;line-height:18px;color:#333;white-space:nowrap">Edison测试</div><div class="abs" style="left:861.8px;top:543.6px;font-size:15px;line-height:18px;color:#333;white-space:nowrap">2</div><div class="abs" style="left:971.8px;top:543.6px;font-size:15px;line-height:18px;color:#333;white-space:nowrap">2</div><div class="abs" style="left:1081.8px;top:543.6px;font-size:15px;line-height:18px;color:#333;white-space:nowrap">2</div><div class="abs" style="left:1191.8px;top:543.6px;font-size:15px;line-height:18px;color:#333;white-space:nowrap">0</div><div class="abs" style="left:1301.8px;top:543.6px;font-size:15px;line-height:18px;color:#333;white-space:nowrap">0</div><div class="abs" style="left:1411.8px;top:543.6px;font-size:15px;line-height:18px;color:#333;white-space:nowrap">0</div><div class="abs" style="left:1521.8px;top:543.6px;font-size:15px;line-height:18px;color:#333;white-space:nowrap">879</div><div class="abs" style="left:1741.8px;top:543.6px;font-size:15px;line-height:18px;color:#333;white-space:nowrap">789</div><div class="abs" style="left:751.8px;top:574.8px;font-size:15px;line-height:18px;color:#333;white-space:nowrap">诺小生</div><div class="abs" style="left:861.8px;top:574.8px;font-size:15px;line-height:18px;color:#333;white-space:nowrap">2</div><div class="abs" style="left:971.8px;top:574.8px;font-size:15px;line-height:18px;color:#333;white-space:nowrap">2</div><div class="abs" style="left:1081.8px;top:574.8px;font-size:15px;line-height:18px;color:#333;white-space:nowrap">0</div><div class="abs" style="left:1191.8px;top:574.8px;font-size:15px;line-height:18px;color:#333;white-space:nowrap">1</div><div class="abs" style="left:1301.8px;top:574.8px;font-size:15px;line-height:18px;color:#333;white-space:nowrap">1</div><div class="abs" style="left:1411.8px;top:574.8px;font-size:15px;line-height:18px;color:#333;white-space:nowrap">0</div><div class="abs" style="left:1521.8px;top:574.8px;font-size:15px;line-height:18px;color:#333;white-space:nowrap">0</div><div class="abs" style="left:1741.8px;top:574.8px;font-size:15px;line-height:18px;color:#333;white-space:nowrap">0</div><div class="abs" style="left:751.8px;top:606.0px;font-size:15px;line-height:18px;color:#333;white-space:nowrap">业务经理</div><div class="abs" style="left:861.8px;top:606.0px;font-size:15px;line-height:18px;color:#333;white-space:nowrap">2</div><div class="abs" style="left:971.8px;top:606.0px;font-size:15px;line-height:18px;color:#333;white-space:nowrap">3</div><div class="abs" style="left:1081.8px;top:606.0px;font-size:15px;line-height:18px;color:#333;white-space:nowrap">0</div><div class="abs" style="left:1191.8px;top:606.0px;font-size:15px;line-height:18px;color:#333;white-space:nowrap">1</div><div class="abs" style="left:1301.8px;top:606.0px;font-size:15px;line-height:18px;color:#333;white-space:nowrap">2</div><div class="abs" style="left:1411.8px;top:606.0px;font-size:15px;line-height:18px;color:#333;white-space:nowrap">0</div><div class="abs" style="left:1521.8px;top:606.0px;font-size:15px;line-height:18px;color:#333;white-space:nowrap">37004</div><div class="abs" style="left:1631.8px;top:606.0px;font-size:15px;line-height:18px;color:#333;white-space:nowrap">1.246</div><div class="abs" style="left:1741.8px;top:606.0px;font-size:15px;line-height:18px;color:#333;white-space:nowrap">35627</div><div class="abs" style="left:751.8px;top:637.2px;font-size:15px;line-height:18px;color:#333;white-space:nowrap">bb</div><div class="abs" style="left:861.8px;top:637.2px;font-size:15px;line-height:18px;color:#333;white-space:nowrap">1</div><div class="abs" style="left:971.8px;top:637.2px;font-size:15px;line-height:18px;color:#333;white-space:nowrap">1</div><div class="abs" style="left:1081.8px;top:637.2px;font-size:15px;line-height:18px;color:#333;white-space:nowrap">0</div><div class="abs" style="left:1191.8px;top:637.2px;font-size:15px;line-height:18px;color:#333;white-space:nowrap">1</div><div class="abs" style="left:1301.8px;top:637.2px;font-size:15px;line-height:18px;color:#333;white-space:nowrap">0</div><div class="abs" style="left:1411.8px;top:637.2px;font-size:15px;line-height:18px;color:#333;white-space:nowrap">0</div><div class="abs" style="left:1521.8px;top:637.2px;font-size:15px;line-height:18px;color:#333;white-space:nowrap">0</div><div class="abs" style="left:1631.8px;top:637.2px;font-size:15px;line-height:18px;color:#333;white-space:nowrap">0.06</div><div class="abs" style="left:1741.8px;top:637.2px;font-size:15px;line-height:18px;color:#333;white-space:nowrap">0</div><div class="abs" style="left:751.8px;top:668.4px;font-size:15px;line-height:18px;color:#333;white-space:nowrap">测试账号</div><div class="abs" style="left:861.8px;top:668.4px;font-size:15px;line-height:18px;color:#333;white-space:nowrap">1</div><div class="abs" style="left:971.8px;top:668.4px;font-size:15px;line-height:18px;color:#333;white-space:nowrap">1</div><div class="abs" style="left:1081.8px;top:668.4px;font-size:15px;line-height:18px;color:#333;white-space:nowrap">0</div><div class="abs" style="left:1191.8px;top:668.4px;font-size:15px;line-height:18px;color:#333;white-space:nowrap">1</div><div class="abs" style="left:1301.8px;top:668.4px;font-size:15px;line-height:18px;color:#333;white-space:nowrap">0</div><div class="abs" style="left:1411.8px;top:668.4px;font-size:15px;line-height:18px;color:#333;white-space:nowrap">0</div><div class="abs" style="left:1521.8px;top:668.4px;font-size:15px;line-height:18px;color:#333;white-space:nowrap">111</div><div class="abs" style="left:1741.8px;top:668.4px;font-size:15px;line-height:18px;color:#333;white-space:nowrap">0</div><div class="abs" style="left:751.8px;top:699.6px;font-size:15px;line-height:18px;color:#333;white-space:nowrap">陈源2</div><div class="abs" style="left:861.8px;top:699.6px;font-size:15px;line-height:18px;color:#333;white-space:nowrap">1</div><div class="abs" style="left:971.8px;top:699.6px;font-size:15px;line-height:18px;color:#333;white-space:nowrap">4</div><div class="abs" style="left:1081.8px;top:699.6px;font-size:15px;line-height:18px;color:#333;white-space:nowrap">1</div><div class="abs" style="left:1191.8px;top:699.6px;font-size:15px;line-height:18px;color:#333;white-space:nowrap">0</div><div class="abs" style="left:1301.8px;top:699.6px;font-size:15px;line-height:18px;color:#333;white-space:nowrap">3</div><div class="abs" style="left:1411.8px;top:699.6px;font-size:15px;line-height:18px;color:#333;white-space:nowrap">0</div><div class="abs" style="left:1521.8px;top:699.6px;font-size:15px;line-height:18px;color:#333;white-space:nowrap">35</div><div class="abs" style="left:1631.8px;top:699.6px;font-size:15px;line-height:18px;color:#333;white-space:nowrap">0.003</div><div class="abs" style="left:1741.8px;top:699.6px;font-size:15px;line-height:18px;color:#333;white-space:nowrap">35</div><div class="abs" style="left:751.8px;top:730.8px;font-size:15px;line-height:18px;color:#333;white-space:nowrap">刘生</div><div class="abs" style="left:861.8px;top:730.8px;font-size:15px;line-height:18px;color:#333;white-space:nowrap">1</div><div class="abs" style="left:971.8px;top:730.8px;font-size:15px;line-height:18px;color:#333;white-space:nowrap">2</div><div class="abs" style="left:1081.8px;top:730.8px;font-size:15px;line-height:18px;color:#333;white-space:nowrap">0</div><div class="abs" style="left:1191.8px;top:730.8px;font-size:15px;line-height:18px;color:#333;white-space:nowrap">1</div><div class="abs" style="left:1301.8px;top:730.8px;font-size:15px;line-height:18px;color:#333;white-space:nowrap">1</div><div class="abs" style="left:1411.8px;top:730.8px;font-size:15px;line-height:18px;color:#333;white-space:nowrap">0</div><div class="abs" style="left:1521.8px;top:730.8px;font-size:15px;line-height:18px;color:#333;white-space:nowrap">300</div><div class="abs" style="left:1631.8px;top:730.8px;font-size:15px;line-height:18px;color:#333;white-space:nowrap">0.0123</div><div class="abs" style="left:1741.8px;top:730.8px;font-size:15px;line-height:18px;color:#333;white-space:nowrap">300</div><div class="abs" style="left:751.8px;top:762.0px;font-size:15px;line-height:18px;color:#333;white-space:nowrap">天创供应链</div><div class="abs" style="left:861.8px;top:762.0px;font-size:15px;line-height:18px;color:#333;white-space:nowrap">1</div><div class="abs" style="left:971.8px;top:762.0px;font-size:15px;line-height:18px;color:#333;white-space:nowrap">2</div><div class="abs" style="left:1081.8px;top:762.0px;font-size:15px;line-height:18px;color:#333;white-space:nowrap">1</div><div class="abs" style="left:1191.8px;top:762.0px;font-size:15px;line-height:18px;color:#333;white-space:nowrap">1</div><div class="abs" style="left:1301.8px;top:762.0px;font-size:15px;line-height:18px;color:#333;white-space:nowrap">0</div><div class="abs" style="left:1411.8px;top:762.0px;font-size:15px;line-height:18px;color:#333;white-space:nowrap">0</div><div class="abs" style="left:1521.8px;top:762.0px;font-size:15px;line-height:18px;color:#333;white-space:nowrap">0</div><div class="abs" style="left:1631.8px;top:762.0px;font-size:15px;line-height:18px;color:#333;white-space:nowrap">1</div><div class="abs" style="left:1741.8px;top:762.0px;font-size:15px;line-height:18px;color:#333;white-space:nowrap">0</div><div class="abs" style="left:751.8px;top:793.2px;font-size:15px;line-height:18px;color:#333;white-space:nowrap">谢嘉仪</div><div class="abs" style="left:861.8px;top:793.2px;font-size:15px;line-height:18px;color:#333;white-space:nowrap">1</div><div class="abs" style="left:971.8px;top:793.2px;font-size:15px;line-height:18px;color:#333;white-space:nowrap">1</div><div class="abs" style="left:1081.8px;top:793.2px;font-size:15px;line-height:18px;color:#333;white-space:nowrap">0</div><div class="abs" style="left:1191.8px;top:793.2px;font-size:15px;line-height:18px;color:#333;white-space:nowrap">1</div><div class="abs" style="left:1301.8px;top:793.2px;font-size:15px;line-height:18px;color:#333;white-space:nowrap">0</div><div class="abs" style="left:1411.8px;top:793.2px;font-size:15px;line-height:18px;color:#333;white-space:nowrap">0</div><div class="abs" style="left:1521.8px;top:793.2px;font-size:15px;line-height:18px;color:#333;white-space:nowrap">1111</div><div class="abs" style="left:1741.8px;top:793.2px;font-size:15px;line-height:18px;color:#333;white-space:nowrap">666</div><div class="abs" style="left:751.8px;top:824.4px;font-size:15px;line-height:18px;color:#333;white-space:nowrap">演示测试账号</div><div class="abs" style="left:861.8px;top:824.4px;font-size:15px;line-height:18px;color:#333;white-space:nowrap">1</div><div class="abs" style="left:971.8px;top:824.4px;font-size:15px;line-height:18px;color:#333;white-space:nowrap">1</div><div class="abs" style="left:1081.8px;top:824.4px;font-size:15px;line-height:18px;color:#333;white-space:nowrap">0</div><div class="abs" style="left:1191.8px;top:824.4px;font-size:15px;line-height:18px;color:#333;white-space:nowrap">0</div><div class="abs" style="left:1301.8px;top:824.4px;font-size:15px;line-height:18px;color:#333;white-space:nowrap">1</div><div class="abs" style="left:1411.8px;top:824.4px;font-size:15px;line-height:18px;color:#333;white-space:nowrap">0</div><div class="abs" style="left:1521.8px;top:824.4px;font-size:15px;line-height:18px;color:#333;white-space:nowrap">0</div><div class="abs" style="left:1741.8px;top:824.4px;font-size:15px;line-height:18px;color:#333;white-space:nowrap">0</div><div class="abs" style="left:861.8px;top:855.6px;font-size:15px;line-height:18px;color:#333;white-space:nowrap">0</div><div class="abs" style="left:971.8px;top:855.6px;font-size:15px;line-height:18px;color:#333;white-space:nowrap">0</div><div class="abs" style="left:1081.8px;top:855.6px;font-size:15px;line-height:18px;color:#333;white-space:nowrap">0</div><div class="abs" style="left:1191.8px;top:855.6px;font-size:15px;line-height:18px;color:#333;white-space:nowrap">0</div><div class="abs" style="left:1301.8px;top:855.6px;font-size:15px;line-height:18px;color:#333;white-space:nowrap">0</div><div class="abs" style="left:1411.8px;top:855.6px;font-size:15px;line-height:18px;color:#333;white-space:nowrap">0</div><div class="abs" style="left:1521.8px;top:855.6px;font-size:15px;line-height:18px;color:#333;white-space:nowrap">102776.39</div><div class="abs" style="left:1631.8px;top:855.6px;font-size:15px;line-height:18px;color:#333;white-space:nowrap">9.4945</div><div class="abs" style="left:1741.8px;top:855.6px;font-size:15px;line-height:18px;color:#333;white-space:nowrap">72463.39</div>
<div class="abs" style="left:1908px;top:87px;width:4px;height:597px;background:#9b9b9b;border-radius:2px"></div>
</div></body></html>
